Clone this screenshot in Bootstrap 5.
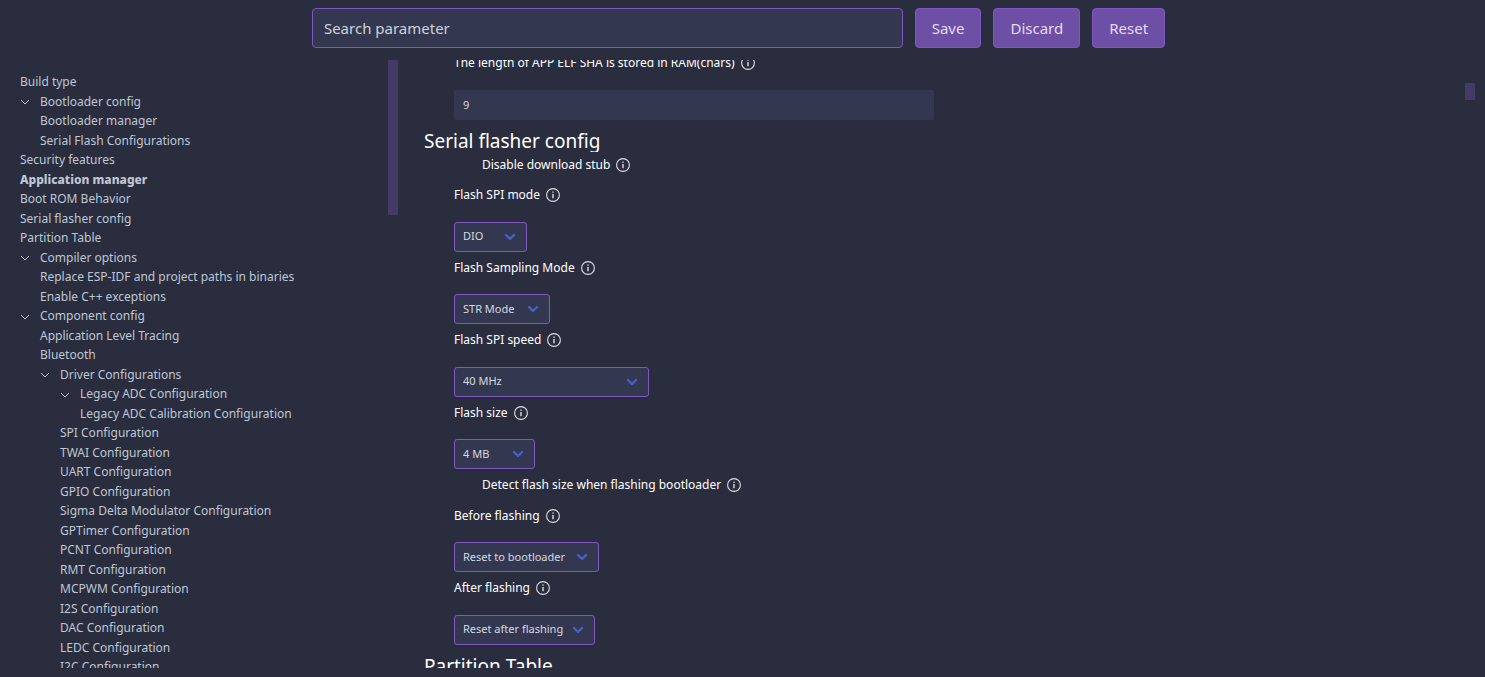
<!DOCTYPE html>
<html lang="en">
<head>
<meta charset="utf-8">
<meta name="viewport" content="width=device-width, initial-scale=1">
<title>SDK Configuration editor</title>
<link href="https://cdn.jsdelivr.net/npm/bootstrap@5.3.0/dist/css/bootstrap.min.css" rel="stylesheet">
<style>
  body { background: #292d3e; color: #fff; font-family: "Noto Sans", "Open Sans", sans-serif; font-size: 12px; }
  .toolbar { padding: 8px 8px 12px 0; gap: 12px; }
  .search-box { width: 40%; }
  .search-box .form-control { height: 40px; padding: 0 11px; font-size: 15px; border-radius: 4px; }
  .form-control, .form-select { background-color: #333850; color: #d5d8e0; border-color: #7e57c2; border-radius: 3px; }
  .form-control:focus, .form-select:focus { background-color: #333850; color: #fff; border-color: #9a78d6; box-shadow: none; }
  .form-control::placeholder { color: #d0d2d8; opacity: 1; }
  .btn-main { height: 40px; padding: 0 16px; font-size: 15px; border-radius: 4px; color: #e4dcf0; background: #6e4fa6; border-color: #7e57c2; }
  .btn-main:hover { color: #fff; background: #7e57c2; }
  .workspace { display: grid; grid-template-columns: 398fr 1077fr; min-height: 0; padding: 0 10px 9px 0; }
  .pane { min-height: 0; }
  .track { width: 10px; flex: none; }
  .thumb { background: #443a68; }
  .thumb-menu { height: 155px; }
  .thumb-main { height: 17px; margin-top: 23px; }
  .menu-tree { padding: 12px 0 0 20px; font-size: 13px; line-height: 1.5; }
  .menu-tree ul { list-style: none; margin: 0; padding: 0 0 0 20px; }
  .menu-tree a { color: #bfc7d5; text-decoration: none; font-size: 12px; white-space: nowrap; }
  .menu-tree svg { width: 10px; height: 10px; margin-right: 10px; color: #bfc7d5; }
  .menu-tree .current { font-weight: 800; }
  .settings { margin-top: -8px; padding-left: 26px; }
  .settings h2 { font-size: 19px; font-weight: 400; line-height: 22px; height: 22px; overflow: hidden; margin: 10px 0 2px; }
  .entry { padding-left: 30px; font-size: 13px; line-height: 1.5; margin-bottom: 5px; }
  .entry-head { padding: 1px 0 2px; }
  .entry-head label, .entry-head span { font-size: 12px; }
  .entry-head svg { width: 14px; height: 14px; margin-left: 6px; vertical-align: -3px; }
  .entry-check { padding-left: 58px; margin-bottom: 8px; }
  .entry .form-control, .entry .form-select { height: 30px; margin-top: 15px; padding: 0 9px; font-size: 11px; }
  .entry .form-control { width: 47.5%; border: 0; border-radius: 2px; }
  .entry .form-select { padding-left: 8px; padding-right: 20px; background-image: url("data:image/svg+xml,%3csvg xmlns='http://www.w3.org/2000/svg' viewBox='0 0 12 8'%3e%3cpath fill='none' stroke='%23485fc7' stroke-width='2.4' stroke-linecap='round' stroke-linejoin='round' d='M2 2l4 4 4-4'/%3e%3c/svg%3e"); background-size: 12px 8px; background-position: right 10px center; }
  #spi-mode { width: 73px; } #sampling { width: 96px; } #spi-speed { width: 195px; }
  #flash-size { width: 81px; } #before { width: 145px; } #after { width: 141px; }
</style>
</head>
<body class="vh-100 overflow-hidden d-flex flex-column">
<svg class="d-none">
  <symbol id="info" viewBox="0 0 14 14"><circle cx="7" cy="7" r="6.4" fill="none" stroke="#dfe0e4" stroke-width="1.1"/><path d="M7 6v4.2" stroke="#dfe0e4" stroke-width="1.4"/><path d="M7 3.4v1.4" stroke="#dfe0e4" stroke-width="1.4"/></symbol>
  <symbol id="chev" viewBox="0 0 10 10"><path d="M1 3l4 4 4-4" fill="none" stroke="currentColor" stroke-width="1"/></symbol>
</svg>
<header class="toolbar d-flex justify-content-center flex-shrink-0">
  <div class="search-box"><input type="search" class="form-control" placeholder="Search parameter" aria-label="Search parameter"></div>
  <button type="button" class="btn btn-main">Save</button>
  <button type="button" class="btn btn-main">Discard</button>
  <button type="button" class="btn btn-main">Reset</button>
</header>
<div class="workspace flex-grow-1">
  <div class="pane d-flex overflow-hidden">
    <nav class="menu-tree flex-grow-1" aria-label="Configuration menu">
      <ul class="p-0">
        <li><a href="#">Build type</a></li>
        <li><svg><use href="#chev"/></svg><a href="#">Bootloader config</a>
          <ul>
            <li><a href="#">Bootloader manager</a></li>
            <li><a href="#">Serial Flash Configurations</a></li>
          </ul></li>
        <li><a href="#">Security features</a></li>
        <li><a href="#" class="current">Application manager</a></li>
        <li><a href="#">Boot ROM Behavior</a></li>
        <li><a href="#">Serial flasher config</a></li>
        <li><a href="#">Partition Table</a></li>
        <li><svg><use href="#chev"/></svg><a href="#">Compiler options</a>
          <ul>
            <li><a href="#">Replace ESP-IDF and project paths in binaries</a></li>
            <li><a href="#">Enable C++ exceptions</a></li>
          </ul></li>
        <li><svg><use href="#chev"/></svg><a href="#">Component config</a>
          <ul>
            <li><a href="#">Application Level Tracing</a></li>
            <li><a href="#">Bluetooth</a></li>
            <li><svg><use href="#chev"/></svg><a href="#">Driver Configurations</a>
              <ul>
                <li><svg><use href="#chev"/></svg><a href="#">Legacy ADC Configuration</a>
                  <ul><li><a href="#">Legacy ADC Calibration Configuration</a></li></ul></li>
                <li><a href="#">SPI Configuration</a></li>
                <li><a href="#">TWAI Configuration</a></li>
                <li><a href="#">UART Configuration</a></li>
                <li><a href="#">GPIO Configuration</a></li>
                <li><a href="#">Sigma Delta Modulator Configuration</a></li>
                <li><a href="#">GPTimer Configuration</a></li>
                <li><a href="#">PCNT Configuration</a></li>
                <li><a href="#">RMT Configuration</a></li>
                <li><a href="#">MCPWM Configuration</a></li>
                <li><a href="#">I2S Configuration</a></li>
                <li><a href="#">DAC Configuration</a></li>
                <li><a href="#">LEDC Configuration</a></li>
                <li><a href="#">I2C Configuration</a></li>
              </ul></li>
          </ul></li>
      </ul>
    </nav>
    <div class="track"><div class="thumb thumb-menu"></div></div>
  </div>
  <main class="pane d-flex overflow-hidden">
    <div class="settings flex-grow-1">
      <div class="entry">
        <div class="entry-head"><label for="sha">The length of APP ELF SHA is stored in RAM(chars)</label><svg><use href="#info"/></svg></div>
        <input id="sha" type="text" inputmode="numeric" class="form-control" value="9">
      </div>
      <h2>Serial flasher config</h2>
      <div class="entry entry-check">
        <div class="entry-head"><span>Disable download stub</span><svg><use href="#info"/></svg></div>
      </div>
      <div class="entry">
        <div class="entry-head"><label for="spi-mode">Flash SPI mode</label><svg><use href="#info"/></svg></div>
        <select id="spi-mode" class="form-select"><option>DIO</option></select>
      </div>
      <div class="entry">
        <div class="entry-head"><label for="sampling">Flash Sampling Mode</label><svg><use href="#info"/></svg></div>
        <select id="sampling" class="form-select"><option>STR Mode</option></select>
      </div>
      <div class="entry">
        <div class="entry-head"><label for="spi-speed">Flash SPI speed</label><svg><use href="#info"/></svg></div>
        <select id="spi-speed" class="form-select"><option>40 MHz</option></select>
      </div>
      <div class="entry">
        <div class="entry-head"><label for="flash-size">Flash size</label><svg><use href="#info"/></svg></div>
        <select id="flash-size" class="form-select"><option>4 MB</option></select>
      </div>
      <div class="entry entry-check">
        <div class="entry-head"><span>Detect flash size when flashing bootloader</span><svg><use href="#info"/></svg></div>
      </div>
      <div class="entry">
        <div class="entry-head"><label for="before">Before flashing</label><svg><use href="#info"/></svg></div>
        <select id="before" class="form-select"><option>Reset to bootloader</option></select>
      </div>
      <div class="entry">
        <div class="entry-head"><label for="after">After flashing</label><svg><use href="#info"/></svg></div>
        <select id="after" class="form-select"><option>Reset after flashing</option></select>
      </div>
      <h2>Partition Table</h2>
    </div>
    <div class="track"><div class="thumb thumb-main"></div></div>
  </main>
</div>
<script src="https://cdn.jsdelivr.net/npm/bootstrap@5.3.0/dist/js/bootstrap.bundle.min.js"></script>
</body>
</html>
